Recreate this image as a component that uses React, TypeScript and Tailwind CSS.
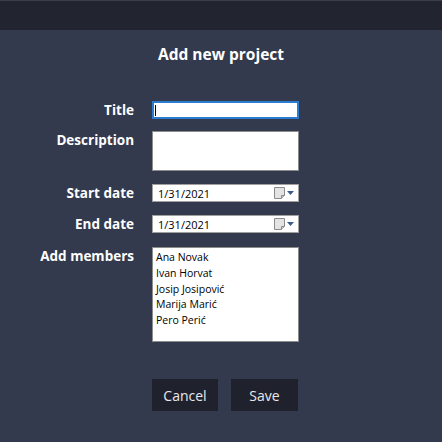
import React from "react";

const members = ["Ana Novak", "Ivan Horvat", "Josip Josipović", "Marija Marić", "Pero Perić"];

const CalendarIcon = () => (
  <span className="flex items-center gap-[2px] mr-[4px]">
    <svg width="11" height="12" viewBox="0 0 11 12">
      <path d="M0.5 0.5h10v8l-3 3h-7z" fill="#e3e3e3" stroke="#8a8a8a" />
      <path d="M7.5 11.5v-3h3" fill="#c8c8c8" stroke="#8a8a8a" />
    </svg>
    <svg width="7" height="4" viewBox="0 0 7 4">
      <path d="M0 0h7l-3.5 4z" fill="#3d5a8c" />
    </svg>
  </span>
);

const DateBox = ({ value }: { value: string }) => (
  <div className="w-[147px] h-[18px] bg-white border border-[#a0a0a0] flex items-center justify-between pl-[5px]">
    <span className="text-[11px] text-black leading-none">{value}</span>
    <CalendarIcon />
  </div>
);

const Label = ({ children }: { children: React.ReactNode }) => (
  <div className="w-[134px] text-right text-[13.5px] font-bold text-white leading-[18px]">{children}</div>
);

export default function App() {
  return (
    <div
      className="w-[442px] h-[442px] bg-[#333a4e] flex flex-col overflow-hidden"
      style={{ fontFamily: '"Open Sans", "Noto Sans", sans-serif' }}
    >
      <div className="h-[30px] bg-[#22252f] border-t border-[#3b3e4a] shrink-0" />
      <div className="pt-[13px] text-center text-white font-bold text-[15.5px] leading-[22px]">Add new project</div>

      <div className="mt-[36px] flex flex-col">
        <div className="flex items-center gap-[18px]">
          <Label>Title</Label>
          <div className="w-[147px] h-[18px] bg-white border-2 border-[#2b7bd0] flex items-center pl-[1px]">
            <span className="w-[1px] h-[11px] bg-black" />
          </div>
        </div>

        <div className="mt-[12px] flex items-start gap-[18px]">
          <Label>Description</Label>
          <div className="w-[147px] h-[40px] bg-white border border-[#8c8c8c]" />
        </div>

        <div className="mt-[13px] flex items-center gap-[18px]">
          <Label>Start date</Label>
          <DateBox value="1/31/2021" />
        </div>

        <div className="mt-[13px] flex items-center gap-[18px]">
          <Label>End date</Label>
          <DateBox value="1/31/2021" />
        </div>

        <div className="mt-[14px] flex items-start gap-[18px]">
          <Label>Add members</Label>
          <div className="w-[147px] h-[95px] bg-white border border-[#8c8c8c] pl-[3px] pt-[2px]">
            {members.map((m) => (
              <div key={m} className="text-[10.5px] leading-[15.8px] text-black">
                {m}
              </div>
            ))}
          </div>
        </div>
      </div>

      <div className="mt-[37px] ml-[152px] flex gap-[13px]">
        <button className="w-[66px] h-[32px] bg-[#1f222d] text-[#e8e8ec] text-[14px]">Cancel</button>
        <button className="w-[67px] h-[32px] bg-[#1f222d] text-[#e8e8ec] text-[14px]">Save</button>
      </div>
    </div>
  );
}
